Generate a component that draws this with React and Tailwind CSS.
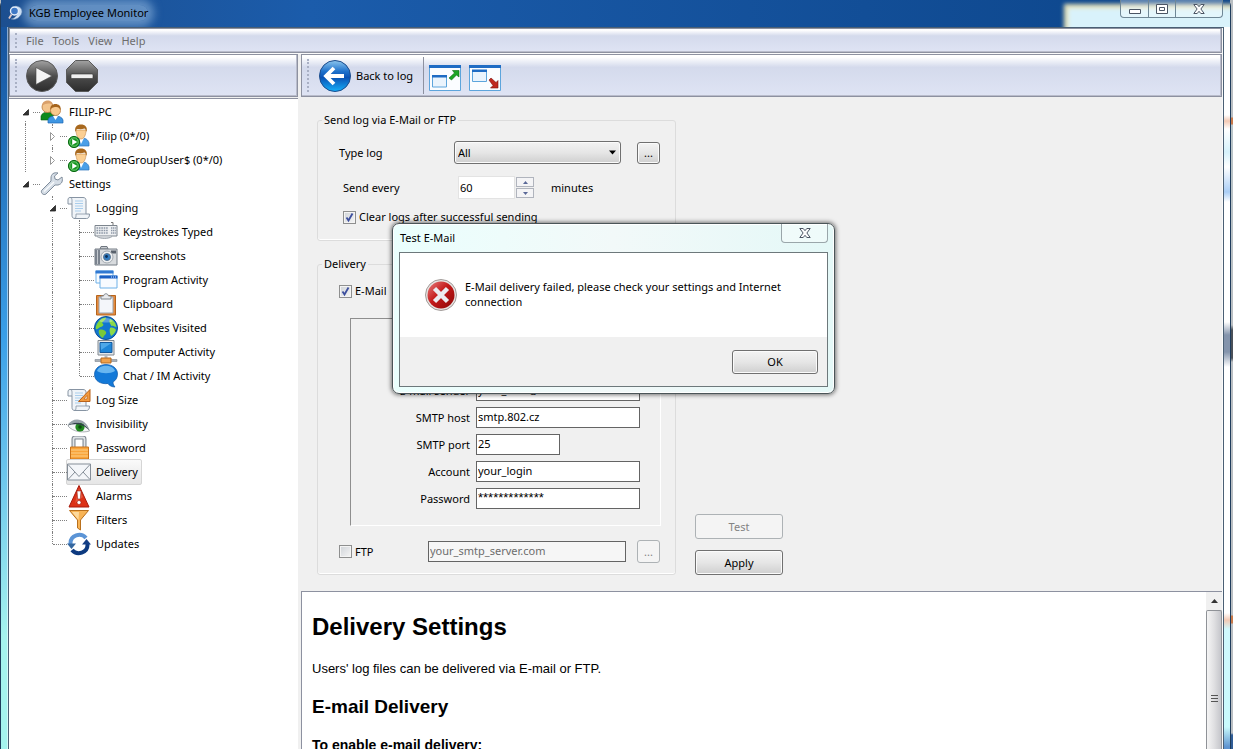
import { useId, useState } from "react";

const UsersIcon = () => (
  <svg width="24" height="24" viewBox="0 0 24 24">
    <path d="M1 20v-4c1-3 4-4 7-4s6 1 6 4v4z" fill="#0f8a1e" stroke="#086012" strokeWidth=".6" />
    <circle cx="7.500" cy="7" r="5.500" fill="#f3c48c" stroke="#b97a3c" strokeWidth=".8" />
    <path d="M2 6c0-4 3-5.500 6-5.500S13 3 13 5c-3-2-7-2-11 1z" fill="#d9a06b" />
    <path d="M8 23v-3c1-3 3-4 7-4s7 1 8 4v3z" fill="#3f96e2" stroke="#1c68b4" strokeWidth=".7" />
    <path d="M13 16l2.500 4 2.500-4z" fill="#fff" />
    <circle cx="15.500" cy="10.500" r="5" fill="#f8c98d" stroke="#b97a3c" strokeWidth=".8" />
    <path d="M10.500 10c-1-4 2-6 5-6s6 2 5 6c-1-2-2-3-4-3s-5 0-6 3z" fill="#a5641c" />
  </svg>
);

const UserIcon = () => (
  <svg width="24" height="24" viewBox="0 0 24 24">
    <path d="M7 22v-3c1-4 3-5 7-5s7 1 8 5v3z" fill="#4a9fe8" stroke="#2a72ba" strokeWidth=".7" />
    <path d="M12 14l2 6 3-6z" fill="#fff" />
    <path d="M9 6c0 5 2 9 5 9s5-4 5-9z" fill="#fbcf93" stroke="#c48a48" strokeWidth=".6" />
    <path d="M8.500 8C7 3 10 .5 14 .5S21 3 19.500 8c-.5-2-1-3-2-3.500C15 5.500 11 5 10 5c-1 1-1 2-1.500 3z" fill="#a8681d" />
    <circle cx="7" cy="18" r="5.600" fill="#15951f" stroke="#0a6a12" />
    <circle cx="7" cy="18" r="4.200" fill="none" stroke="#9be09a" strokeWidth=".7" />
    <path d="M5.200 15l5 3-5 3z" fill="#fff" />
  </svg>
);

const WrenchIcon = () => (
  <svg width="24" height="24" viewBox="0 0 24 24">
    <path
      d="M22 5l-4 3-3-1-.5-3L18 1c-4-1-7 1-7 5v3L2 18c-2 2 1 6 4 4l9-9h3c4-1 5-4 4-8z"
      fill="#d5dde6"
      stroke="#7f8c9b"
    />
    <path d="M4 19.500L14 10" stroke="#f7fafc" strokeWidth="1.500" />
  </svg>
);

const ScrollIcon = ({ ruler }) => (
  <svg width="24" height="24" viewBox="0 0 24 24">
    <path d="M3 1.500h13c2 0 3 1 3 3V18h3.500c0 3-1 4.500-3 4.500H8c-2 0-3-1-3-3V8H1V4c0-1.500.5-2.500 2-2.500z" fill="#f0f4f8" stroke="#8794a3" />
    <path d="M5 8V4c0-2-1-2.500-2-2.500M19 18H9v2c0 2-1 2.500-2 2.500" fill="none" stroke="#8794a3" strokeWidth=".8" />
    <path d="M8 5h8M8 7.500h8M8 10h8M8 12.500h8M8 15h6" stroke="#a9cdec" strokeWidth="1.200" />
    {ruler && (
      <g>
        <path d="M11.500 13.500L23 1.500v12z" fill="#f39a3d" stroke="#b9621a" />
        <path d="M17 11l3-3.500V11z" fill="#fff" stroke="#b9621a" strokeWidth=".7" />
      </g>
    )}
  </svg>
);

const KeyboardIcon = () => (
  <svg width="24" height="24" viewBox="0 0 24 24">
    <path d="M19 5V2.500h-2" fill="none" stroke="#777" />
    <path d="M1 5.500h22v10.500H1z" fill="#eef0f2" stroke="#7d858e" />
    <path d="M3 16.500c3 2.500 12 2.500 15 0" fill="#d9dce0" stroke="#9aa1a9" />
    <path d="M2.500 8h12M2.500 10.500h12M2.500 13h12" stroke="#8d97a6" strokeWidth="1.500" strokeDasharray="1.600 .8" />
    <path d="M17 8h5M17 10.500h5M17 13h5" stroke="#8d97a6" strokeWidth="1.500" strokeDasharray="1.200 .6" />
  </svg>
);

const CameraIcon = () => (
  <svg width="24" height="24" viewBox="0 0 24 24">
    <path d="M6 5l1-2.500h6L14 5z" fill="#c8ccd1" stroke="#6f767f" />
    <path d="M1 5h22v16H1z" fill="#d8dbde" stroke="#777e87" />
    <path d="M1 5.500h5v15H1z" fill="#7b838e" />
    <path d="M3.500 6v14" stroke="#c4c9cf" />
    <path d="M17 6.500h5v3h-5z" fill="#59616c" />
    <circle cx="13" cy="13" r="6" fill="#eef0f1" stroke="#a3a9b0" />
    <circle cx="13" cy="13" r="3.500" fill="#2f7cc4" stroke="#5d7690" />
    <circle cx="12.500" cy="12.500" r="1.400" fill="#0e2f55" />
  </svg>
);

const WindowsIcon = () => (
  <svg width="24" height="24" viewBox="0 0 24 24">
    <path d="M2 3h17v12H2z" fill="#f8fbff" stroke="#6fb1e8" />
    <path d="M1.500 2.500h18v3h-18z" fill="#2f78d2" />
    <path d="M6 8h17v12H6z" fill="#f8fbff" stroke="#6fb1e8" />
    <path d="M5.500 7.500h18v3h-18z" fill="#1a5fc4" />
    <path d="M17 9h5" stroke="#cde4ff" strokeDasharray="1 1" />
  </svg>
);

const ClipboardIcon = () => (
  <svg width="24" height="24" viewBox="0 0 24 24">
    <path d="M2.500 3.500h19v19.500h-19z" fill="#e58a3c" stroke="#b4641e" />
    <path d="M5 5h14v16H5z" fill="#f4f6fa" stroke="#9aa2ac" />
    <path d="M7 7V4h2.500C10 1 14 1 14.500 4H17v3z" fill="#e9ebee" stroke="#808890" />
  </svg>
);

const GlobeIcon = () => (
  <svg width="24" height="24" viewBox="0 0 24 24">
    <circle cx="12" cy="12" r="11.500" fill="#1177cf" stroke="#0a4e97" />
    <path d="M3 8c2-4 6-7 9-6.500C12 4 9 5 8 7c2 1 2 3-1 4-2 0-3 3-5 2-.5-2 0-3 1-5z" fill="#7fd43c" />
    <path d="M5 14c3-1 6 0 7 2s-2 3-3 6c-3-1-5-5-4-8z" fill="#79c93a" />
    <path d="M16 3c4 1 6 5 6.500 8-2 0-3-2-5-1-1-2-3-4-1.500-7zM16 12c2-1 5 0 6 2-1 3-3 5-5 6-1-3-2-5-1-8z" fill="#8cda48" />
    <path d="M5 5c3-4 11-4 14 0-4 2-10 2-14 0z" fill="#fff" opacity=".3" />
  </svg>
);

const ComputerIcon = () => (
  <svg width="24" height="24" viewBox="0 0 24 24">
    <path d="M4 .5h16v14.500H4z" fill="#e5e8ea" stroke="#808890" />
    <path d="M6 2.500h12v10H6z" fill="#1e86d8" stroke="#15599c" />
    <path d="M6.500 3h11L7 10z" fill="#6cc0f5" opacity=".6" />
    <path d="M10.500 15h3v4h-3z" fill="#b6bcc2" />
    <path d="M1 19.500h22v2H1z" fill="#aab1b8" stroke="#7e868e" strokeWidth=".6" />
    <path d="M7 18h10v5H7z" fill="#f0a14a" stroke="#b4691e" />
  </svg>
);

const ChatIcon = () => (
  <svg width="24" height="24" viewBox="0 0 24 24">
    <path d="M12 .5C18 .5 23.500 4 23.500 10c0 4-2 6.500-4.500 8 0 2 1 4 2 5-3 0-6-1.500-7-3.500C7 20.500.5 17 .5 10.500.5 4 6 .5 12 .5z" fill="#1379d8" stroke="#0d57a8" strokeWidth=".7" />
    <path d="M3 7c2-7 16-7 18 0-5 3-13 3-18 0z" fill="#8fd0fb" opacity=".7" />
  </svg>
);

const EyeIcon = () => (
  <svg width="24" height="24" viewBox="0 0 24 24">
    <path d="M1 14C5 7 17 6 22.500 19 16 21 6 20 1 14z" fill="#f4f6f7" stroke="#8c9298" strokeWidth=".7" />
    <circle cx="13" cy="15" r="4.600" fill="#21881f" />
    <circle cx="13" cy="15" r="1.800" fill="#0b4d0f" />
    <path d="M.5 13C6 4 19 6 22.500 18 17 9 8 10 .5 13z" fill="#98a2aa" />
    <path d="M.5 13.500C8 9 17 10 22.500 18.500 16 11.500 8 11 .5 13.500z" fill="#31404b" />
  </svg>
);

const LockIcon = () => (
  <svg width="24" height="24" viewBox="0 0 24 24">
    <path d="M6.500 12V3c0-1 .5-1.500 1.500-1.500h8c1 0 1.500.5 1.500 1.500v9" fill="none" stroke="#7f8790" strokeWidth="4" />
    <path d="M6.500 12V3c0-1 .5-1.500 1.500-1.500h8c1 0 1.500.5 1.500 1.500v9" fill="none" stroke="#e0e4e7" strokeWidth="1.800" />
    <path d="M3.500 11h18v12h-18z" fill="#f9a43a" stroke="#c9731a" />
    <path d="M4 14h17M4 17h17M4 20h17" stroke="#fdd088" strokeWidth="1.200" />
  </svg>
);

const MailIcon = () => (
  <svg width="24" height="24" viewBox="0 0 24 24">
    <path d="M.5 4h23v16H.5z" fill="#f4f6f9" stroke="#858e98" />
    <path d="M1 4.500l11 12 11-12M1 19.500l7-7.500M23 19.500L16 12" fill="none" stroke="#858e98" />
  </svg>
);

const AlarmIcon = () => (
  <svg width="24" height="24" viewBox="0 0 24 24">
    <path d="M12 1.500L22 23H2z" fill="#dc3218" stroke="#a81a0c" strokeLinejoin="round" />
    <path d="M12 4l4 9-8 6z" fill="#f47a5c" opacity=".5" />
    <path d="M10 7h4l-.7 8h-2.600z" fill="#fff" stroke="#8a1408" strokeWidth=".5" />
    <circle cx="12" cy="18.500" r="2" fill="#fff" stroke="#8a1408" strokeWidth=".5" />
  </svg>
);

const FilterIcon = () => (
  <svg width="24" height="24" viewBox="0 0 24 24">
    <path d="M2.500 2.500h19l-8 9.500v10l-3-2v-8z" fill="#f8b456" stroke="#b9701d" />
    <path d="M5 4h7l-.5 8z" fill="#fee2ae" opacity=".8" />
  </svg>
);

const UpdateIcon = () => (
  <svg width="24" height="24" viewBox="0 0 24 24">
    <path d="M3.500 12C3 3 14 0 19 6" fill="none" stroke="#5b94d6" strokeWidth="4" />
    <path d="M0 11.500h9L4.500 17z" fill="#34679f" />
    <path d="M20.500 12c.5 9-10.500 12-15.500 6" fill="none" stroke="#0d3a80" strokeWidth="4" />
    <path d="M24 12.500h-9L19.500 7z" fill="#153f85" />
  </svg>
);

const PlayIcon = () => (
  <svg width="32" height="32" viewBox="0 0 32 32">
    <defs>
      <linearGradient id="play" x1="0" y1="0" x2="0" y2="1">
        <stop offset="0" stopColor="#a3a3a3" />
        <stop offset=".5" stopColor="#4d4d4d" />
        <stop offset="1" stopColor="#2c2c2c" />
      </linearGradient>
    </defs>
    <circle cx="16" cy="16" r="15.500" fill="url(#play)" stroke="#5a5a5a" />
    <path d="M10 7.500l16 8.500-16 8.500z" fill="#f4f4f4" stroke="#444" strokeWidth=".6" />
  </svg>
);

const StopIcon = () => (
  <svg width="32" height="32" viewBox="0 0 32 32">
    <path d="M9.500.5h13l9 9v13l-9 9h-13l-9-9v-13z" fill="url(#play)" stroke="#5a5a5a" />
    <rect x="5" y="14" width="22" height="4.500" rx="1" fill="#f0f0f0" stroke="#333" strokeWidth=".6" />
  </svg>
);

const BackIcon = () => (
  <svg width="32" height="32" viewBox="0 0 32 32">
    <defs>
      <linearGradient id="back" x1="0" y1="0" x2="0" y2="1">
        <stop offset="0" stopColor="#8cc6ee" />
        <stop offset=".35" stopColor="#1f72cc" />
        <stop offset=".55" stopColor="#0a52b4" />
        <stop offset="1" stopColor="#14b0fa" />
      </linearGradient>
    </defs>
    <circle cx="16" cy="16" r="15.500" fill="url(#back)" stroke="#1c4c8c" />
    <path d="M15 8l-8 8 8 8M8 16h17" fill="none" stroke="#fff" strokeWidth="3.800" />
  </svg>
);

const RestoreIcon = ({ shrink }) => (
  <svg width="32" height="26" viewBox="0 0 32 26">
    <path d="M.5 1h31v24.500H.5z" fill="#fbfdff" stroke="#5da5dc" />
    <path d="M0 0h32v3H0z" fill="#1f6cc4" />
    {shrink ? (
      <g>
        <path d="M3.500 5.500h14v11h-14z" fill="#eaf4fd" stroke="#5da5dc" />
        <path d="M3 4.500h15v2.500H3z" fill="#1f6cc4" />
        <path d="M20 15l2-2 5 4.500 2-2v7.500h-7.500l2.500-2.500z" fill="#c0281f" stroke="#7c120c" strokeWidth=".6" />
      </g>
    ) : (
      <g>
        <path d="M3.500 11h14v11h-14z" fill="#eaf4fd" stroke="#5da5dc" />
        <path d="M3 10h15v2.500H3z" fill="#1f6cc4" />
        <path d="M20 13l5.500-5L23.500 5.500h6.500V12l-2.500-2-5 5z" fill="#1da524" stroke="#0c6c12" strokeWidth=".6" />
      </g>
    )}
  </svg>
);

const AppIcon = () => (
  <svg width="16" height="16" viewBox="0 0 16 16">
    <path d="M7 1c7 0 9 6 5 10-2 3-6 4-9 3 7-1 8-9 4-13z" fill="#d4e4f6" stroke="#5578a8" strokeWidth=".6" />
    <circle cx="6.500" cy="6" r="4" fill="#3f79c6" stroke="#e7eff9" strokeWidth="1.400" />
    <path d="M3.500 9.500L1 13.500" stroke="#e0c8c8" strokeWidth="1.800" />
  </svg>
);

const CloseGlyph = () => (
  <svg width="12" height="10" viewBox="0 0 12 10">
    <path d="M.8.5h3.400L6 2.700 7.800.5h3.400L7.900 5l3.300 4.500H7.800L6 7.300 4.200 9.500H.8L4.100 5z" fill="#fdfdfd" stroke="#4b5564" />
  </svg>
);

const ErrorIcon = () => (
  <svg width="32" height="32" viewBox="0 0 32 32">
    <defs>
      <linearGradient id="error" x1="0" y1="0" x2="1" y2="1">
        <stop offset="0" stopColor="#e88080" />
        <stop offset=".45" stopColor="#c41a1a" />
        <stop offset="1" stopColor="#8e0808" />
      </linearGradient>
    </defs>
    <circle cx="16" cy="16" r="15.500" fill="#e8e4e2" stroke="#8d8583" strokeWidth=".8" />
    <circle cx="16" cy="16" r="13.500" fill="url(#error)" />
    <path d="M9.500 9.500l13 13M22.500 9.500l-13 13" stroke="#ececf0" strokeWidth="4.500" />
  </svg>
);

// guides: one entry per ancestor column, true draws the dotted line
const tree = [
  { label: "FILIP-PC", icon: <UsersIcon />, guides: [], arrow: "open", down: true },
  { label: "Filip (0*/0)", icon: <UserIcon />, guides: [true], arrow: "closed", up: true, down: true },
  { label: "HomeGroupUser$ (0*/0)", icon: <UserIcon />, guides: [true], arrow: "closed", up: true },
  { label: "Settings", icon: <WrenchIcon />, guides: [], arrow: "open", up: false },
  { label: "Logging", icon: <ScrollIcon />, guides: [false], arrow: "open", up: true, down: true },
  { label: "Keystrokes Typed", icon: <KeyboardIcon />, guides: [false, true], up: true, down: true },
  { label: "Screenshots", icon: <CameraIcon />, guides: [false, true], up: true, down: true },
  { label: "Program Activity", icon: <WindowsIcon />, guides: [false, true], up: true, down: true },
  { label: "Clipboard", icon: <ClipboardIcon />, guides: [false, true], up: true, down: true },
  { label: "Websites Visited", icon: <GlobeIcon />, guides: [false, true], up: true, down: true },
  { label: "Computer Activity", icon: <ComputerIcon />, guides: [false, true], up: true, down: true },
  { label: "Chat / IM Activity", icon: <ChatIcon />, guides: [false, true], up: true },
  { label: "Log Size", icon: <ScrollIcon ruler />, guides: [false], up: true, down: true },
  { label: "Invisibility", icon: <EyeIcon />, guides: [false], up: true, down: true },
  { label: "Password", icon: <LockIcon />, guides: [false], up: true, down: true },
  { label: "Delivery", icon: <MailIcon />, guides: [false], up: true, down: true },
  { label: "Alarms", icon: <AlarmIcon />, guides: [false], up: true, down: true },
  { label: "Filters", icon: <FilterIcon />, guides: [false], up: true, down: true },
  { label: "Updates", icon: <UpdateIcon />, guides: [false], up: true },
];

const TreeRow = ({ item, selected, onSelect }) => (
  <li className="flex h-6 pl-4">
    {item.guides.map((line, index) => (
      <span
        key={index}
        className={`w-[27px] shrink-0 border-l border-dotted ${line ? "border-[#808080]" : "border-transparent"}`}
      />
    ))}
    <span className="relative flex w-[15px] shrink-0 items-center">
      <span className="flex h-full w-px flex-col">
        <span className={`h-3 border-l border-dotted ${item.up ? "border-[#808080]" : "border-transparent"}`} />
        <span className={`h-3 border-l border-dotted ${item.down ? "border-[#808080]" : "border-transparent"}`} />
      </span>
      <span className="flex-1 border-t border-dotted border-[#808080]" />
      {item.arrow && (
        <svg className="absolute top-1 -left-2 bg-white" width="16" height="16" viewBox="0 0 16 16">
          {item.arrow === "open" ? (
            <path d="M11.500 5.500v5.500H6z" fill="#333" stroke="#222" strokeWidth=".8" />
          ) : (
            <path d="M6.500 4.500v8l4-4z" fill="#fff" stroke="#999" />
          )}
        </svg>
      )}
    </span>
    <button
      onClick={onSelect}
      className={`-my-px -ml-px flex items-center gap-[5px] rounded-xs border pr-[3px] whitespace-nowrap ${
        selected ? "border-[#d5d5d5] bg-linear-to-b from-[#fafafa] to-[#e6e6e6]" : "border-transparent"
      }`}
    >
      {item.icon}
      {item.label}
    </button>
  </li>
);

const Grip = () => (
  <span className="my-1 mr-[9px] ml-[5px] w-[2px] shrink-0 self-stretch border-l-2 border-dotted border-[#a9b0c4]" />
);

const Checkbox = ({ label, defaultChecked }) => {
  const id = useId();
  return (
    <div className="flex items-center gap-[3px]">
      <span className="relative flex">
        <input
          id={id}
          type="checkbox"
          defaultChecked={defaultChecked}
          className="peer size-[13px] appearance-none border border-[#8e8f8f] bg-linear-to-br from-[#cfd3d8] to-[#f6f6f6] shadow-[inset_0_0_0_1px_#f4f4f4]"
        />
        <svg
          className="pointer-events-none absolute inset-0 hidden peer-checked:block"
          width="13"
          height="13"
          viewBox="0 0 13 13"
        >
          <path d="M3.500 6.500l2 3 4-7" fill="none" stroke="#3d4f9e" strokeWidth="1.800" />
        </svg>
      </span>
      <label htmlFor={id}>{label}</label>
    </div>
  );
};

const Field = ({ label, value, className }) => {
  const id = useId();
  return (
    <div className="flex items-center gap-1.5">
      <label htmlFor={id} className="w-[119px] text-right whitespace-nowrap">
        {label}
      </label>
      <input
        id={id}
        type="text"
        defaultValue={value}
        className={`h-[21px] border border-[#646464] bg-white px-px pb-0.5 ${className}`}
      />
    </div>
  );
};

const buttonClass =
  "rounded-[3px] border border-[#707070] bg-linear-to-b from-[#f3f3f3] via-[#e6e6e6] to-[#cfcfcf] shadow-[inset_0_0_0_1px_#fbfbfb]";
const disabledClass = "rounded-[3px] border border-[#adb2b5] bg-[#f4f4f4] text-[#838383]";
const barClass =
  "flex items-center border border-[#8d91a0] bg-linear-to-b from-white from-5% via-[#d4daec] via-30% to-[#dfe4f4] shadow-[inset_-1px_-1px_0_#b9bccb]";

const ErrorDialog = ({ onClose }) => (
  <div
    role="dialog"
    aria-label="Test E-Mail"
    className="absolute top-[223px] left-[392px] w-[443px] rounded-[7px] border border-[#4a5558] bg-linear-to-r from-[#eafffd] via-[#f2f9f9] to-[#e4f8f7] px-1.5 pb-1.5 shadow-[0_0_4px_1px_#00000088,inset_0_0_0_1px_#ffffff]"
  >
    <div className="flex h-7 justify-between pl-px">
      <span className="leading-7">Test E-Mail</span>
      <button
        onClick={onClose}
        aria-label="Close"
        className="flex h-[19px] w-[47px] items-center justify-center rounded-b-[4px] border border-t-0 border-[#9aa6aa] bg-white/40"
      >
        <CloseGlyph />
      </button>
    </div>
    <div className="border border-[#6d787b] bg-[#f0f0f0]">
      <div className="flex h-[84px] gap-2 bg-white px-[25px] pt-[26px]">
        <ErrorIcon />
        <p className="w-[335px] leading-[15px]">
          E-Mail delivery failed, please check your settings and Internet connection
        </p>
      </div>
      <div className="flex h-[49px] justify-end px-[9px] pt-[13px]">
        <button onClick={onClose} className={`h-6 w-[86px] ${buttonClass}`}>
          OK
        </button>
      </div>
    </div>
  </div>
);

const SettingsForm = () => {
  const [interval, setInterval] = useState(60);

  return (
    <div className="flex shrink-0 items-end gap-[19px] pt-[15px] pb-4 pl-4">
      <div className="w-[359px]">
        <fieldset className="h-[129px] rounded-[3px] border border-[#dcdcdc] shadow-[inset_0_-1px_0_#ffffff]">
          <legend className="ml-1 px-0.5 leading-4">Send log via E-Mail or FTP</legend>
          <div className="mt-[13px] flex items-center pl-[21px]">
            <label htmlFor="type-log" className="w-[115px]">
              Type log
            </label>
            <div className="relative">
              <select
                id="type-log"
                className={`block h-[23px] w-[167px] appearance-none px-[3px] ${buttonClass}`}
              >
                <option>All</option>
              </select>
              <svg className="pointer-events-none absolute top-[9px] right-[5px]" width="7" height="5" viewBox="0 0 7 5">
                <path d="M0 .5h7L3.500 4.500z" fill="#000" />
              </svg>
            </div>
            <button className={`ml-4 h-[22px] w-[23px] ${buttonClass}`}>...</button>
          </div>
          <div className="mt-3 flex items-center pl-[25px]">
            <label htmlFor="interval" className="w-[115px]">
              Send every
            </label>
            <input
              id="interval"
              type="text"
              value={interval}
              onChange={(e) => setInterval(e.target.value)}
              className="h-[23px] w-[57px] border border-[#e3e3e3] bg-white px-px"
            />
            <div className="ml-px flex w-[18px] flex-col gap-px">
              <button
                aria-label="Increase"
                onClick={() => setInterval(Number(interval) + 1)}
                className="flex h-2.5 items-center justify-center border border-[#b0b4bd] bg-[#f4f4f6]"
              >
                <svg width="5" height="3" viewBox="0 0 5 3">
                  <path d="M0 3h5L2.500 0z" fill="#5a6898" />
                </svg>
              </button>
              <button
                aria-label="Decrease"
                onClick={() => setInterval(Number(interval) - 1)}
                className="flex h-2.5 items-center justify-center border border-[#b0b4bd] bg-[#f4f4f6]"
              >
                <svg width="5" height="3" viewBox="0 0 5 3">
                  <path d="M0 0h5L2.500 3z" fill="#5a6898" />
                </svg>
              </button>
            </div>
            <span className="ml-[17px]">minutes</span>
          </div>
          <div className="mt-2.5 pl-[25px]">
            <Checkbox label="Clear logs after successful sending" defaultChecked />
          </div>
        </fieldset>

        <fieldset className="mt-[15px] rounded-[3px] border border-[#dcdcdc] pb-[11px] shadow-[inset_0_-1px_0_#ffffff]">
          <legend className="ml-1 px-0.5 leading-4">Delivery</legend>
          <div className="mt-[11px] pl-[21px]">
            <Checkbox label="E-Mail" defaultChecked />
          </div>
          <div className="mt-[19px] mr-3.5 ml-8 flex h-[208px] flex-col justify-end gap-1.5 border border-t-[#8e8e8e] border-r-white border-b-white border-l-[#8e8e8e] pb-4">
            <Field label="E-mail sender" value="your_mail@email.cz" className="w-[164px]" />
            <Field label="SMTP host" value="smtp.802.cz" className="w-[164px]" />
            <Field label="SMTP port" value="25" className="w-[84px]" />
            <Field label="Account" value="your_login" className="w-[164px]" />
            <Field
              label="Password"
              value="*************"
              className="w-[164px] font-['Liberation_Sans',Arial,sans-serif] text-[13px]"
            />
          </div>
          <div className="mt-3.5 flex items-center pl-[21px]">
            <div className="w-[89px]">
              <Checkbox label="FTP" />
            </div>
            <input
              type="text"
              aria-label="FTP server"
              disabled
              defaultValue="your_smtp_server.com"
              className="h-[21px] w-[198px] border border-[#646464] bg-[#f6f6f6] px-px pb-0.5 text-[#6d6d6d]"
            />
            <button disabled className={`ml-[11px] h-[23px] w-[23px] ${disabledClass}`}>
              ...
            </button>
          </div>
        </fieldset>
      </div>
      <div className="flex flex-col gap-[11px]">
        <button disabled className={`h-[25px] w-[88px] ${disabledClass}`}>
          Test
        </button>
        <button className={`h-[25px] w-[88px] ${buttonClass}`}>Apply</button>
      </div>
    </div>
  );
};

const App = () => {
  const [selected, setSelected] = useState("Delivery");
  const [dialogOpen, setDialogOpen] = useState(true);

  return (
    <div className="relative flex h-screen overflow-hidden bg-[linear-gradient(#b9bec2_117px,#c87848_118px,#c87848_124px,#b9c4c8_125px,#b9bec2_325px,#4a5058_330px,#4a5058_358px,#b9bec2_362px,#b9bec2_615px,#c87848_616px,#c87848_623px,#b9bec2_624px,#b9bec2_733px,#2f5c96_735px)] pr-[2px] font-['Noto_Sans','Open_Sans',sans-serif] text-[11px] leading-4 text-black">
      <div className="flex min-w-0 flex-1 flex-col rounded-t-md border-x border-[#1f3c5c] bg-linear-to-b from-[#17559f] from-5% via-[#3a9fe8] via-45% to-[#a5f3ee] to-85%">
        <header className="relative flex h-[27px] shrink-0 items-center justify-between overflow-hidden bg-linear-to-r from-[#1c4f90] via-[#1b5cab] via-25% to-[#0c458a] pl-[7px]">
          <div className="absolute top-1 -right-2 h-10 w-[174px] border-4 border-[#e6dfb4] bg-[#d9f2fb] blur-[2px]" />
          <div className="relative flex h-full items-center gap-[5px] pb-px">
            <AppIcon />
            <span className="rounded-full bg-[#8fb6de]/60 shadow-[0_0_8px_6px_#8fb6de99]">KGB Employee Monitor</span>
          </div>
          <div className="relative mr-[7px] flex h-[18px] self-start rounded-b-[4px] border border-t-0 border-[#6f8796] bg-white/30">
            <button aria-label="Minimize" className="flex w-7 items-center justify-center border-r border-[#6f8796]">
              <svg width="12" height="10" viewBox="0 0 12 10">
                <path d="M.5 5.500h11v4H.5z" fill="#fff" stroke="#4b5564" />
              </svg>
            </button>
            <button aria-label="Maximize" className="flex w-[27px] items-center justify-center border-r border-[#6f8796]">
              <svg width="12" height="10" viewBox="0 0 12 10">
                <path d="M.5.5h11v9H.5z" fill="#fff" stroke="#4b5564" />
                <path d="M3.500 3.500h5v3h-5z" fill="#fff" stroke="#4b5564" />
              </svg>
            </button>
            <button aria-label="Close window" className="flex w-[46px] items-center justify-center">
              <CloseGlyph />
            </button>
          </div>
        </header>

        <div className="flex min-h-0 flex-1">
          <div className="w-[7px] shrink-0 border-r border-white/50" />
          <div className="flex min-w-0 flex-1 flex-col border border-b-0 border-[#4a5f74] bg-[#fafafa] pr-px">
            <nav className={`${barClass} h-[25px] shrink-0 text-[#6d6d6d]`}>
              <Grip />
              <div className="flex gap-[9px] pt-px">
                <button>File</button>
                <button>Tools</button>
                <button>View</button>
                <button>Help</button>
              </div>
            </nav>

            <div className="mt-px flex min-h-0 flex-1 bg-[#f0f0f0]">
              <aside className="flex w-[289px] shrink-0 flex-col">
                <div className={`${barClass} h-[43px] shrink-0`}>
                  <Grip />
                  <div className="flex gap-2">
                    <button aria-label="Start">
                      <PlayIcon />
                    </button>
                    <button aria-label="Stop">
                      <StopIcon />
                    </button>
                  </div>
                </div>
                <ul className="mt-px flex-1 border-t border-[#8d91a0] bg-white pt-px">
                  {tree.map((item) => (
                    <TreeRow
                      key={item.label}
                      item={item}
                      selected={item.label === selected}
                      onSelect={() => setSelected(item.label)}
                    />
                  ))}
                </ul>
              </aside>

              <main className="ml-[3px] flex min-w-0 flex-1 flex-col">
                <div className={`${barClass} h-[43px] shrink-0`}>
                  <Grip />
                  <button className="ml-px flex items-center gap-[5px]">
                    <BackIcon />
                    Back to log
                  </button>
                  <span className="mr-[5px] ml-2.5 h-[37px] border-l border-[#8d91a0]" />
                  <div className="flex gap-2 pt-1">
                    <button aria-label="Expand window">
                      <RestoreIcon />
                    </button>
                    <button aria-label="Shrink window">
                      <RestoreIcon shrink />
                    </button>
                  </div>
                </div>

                <SettingsForm />

                <section className="flex min-h-0 flex-1 overflow-hidden border-t border-l border-[#8d91a0] bg-white">
                  <article className="flex-1 pt-[21px] pl-2.5 font-['Liberation_Sans',Arial,sans-serif] text-[13px]">
                    <h1 className="text-[24px] leading-7 font-bold">Delivery Settings</h1>
                    <p className="mt-5">Users' log files can be delivered via E-mail or FTP.</p>
                    <h2 className="mt-[18px] text-[19px] leading-6 font-bold">E-mail Delivery</h2>
                    <p className="mt-[18px] text-[14px] font-bold">To enable e-mail delivery:</p>
                  </article>
                  <div className="flex w-4 shrink-0 flex-col bg-[#f0f0f0]">
                    <button aria-label="Scroll up" className="flex h-[18px] items-center justify-center">
                      <svg width="7" height="4" viewBox="0 0 7 4">
                        <path d="M0 4h7L3.500 0z" fill="#333" />
                      </svg>
                    </button>
                    <div className="flex flex-1 justify-center rounded-t-xs border border-b-0 border-[#8f9297] bg-linear-to-r from-[#f5f5f5] via-[#e0e0e2] to-[#c5c6cb] pt-[84px]">
                      <svg width="7" height="8" viewBox="0 0 7 8">
                        <path d="M0 .5h7M0 3.500h7M0 6.500h7" stroke="#555" />
                      </svg>
                    </div>
                  </div>
                </section>
              </main>
            </div>
          </div>
          <div className="w-1.5 shrink-0 bg-[linear-gradient(#ffffff_88px,#f3c9b4_94px,#ffffff_102px,#d5f1fb_125px,#ffffff_140px,#a9cdf5_165px,#ffffff_175px,#ffffff_295px,#8494ac_308px,#8494ac_325px,#ffffff_340px,#ffffff_586px,#f3c9b4_593px,#d0f8fc_602px,#c9fafc_700px,#5f94d0_720px)]" />
        </div>
      </div>

      {dialogOpen && <ErrorDialog onClose={() => setDialogOpen(false)} />}
    </div>
  );
};

export default App;
